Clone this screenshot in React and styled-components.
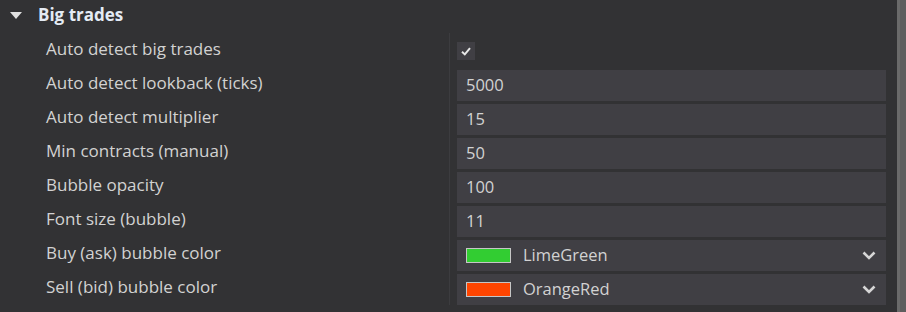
import React from "react"
import styled, { createGlobalStyle } from "styled-components"

const GlobalStyle = createGlobalStyle`
  html, body {
    margin: 0;
    padding: 0;
    background: #323234;
  }
  body {
    font-family: "Open Sans", "Noto Sans", sans-serif;
  }
`

const Page = styled.div`
  display: flex;
  width: 906px;
  height: 312px;
  overflow: hidden;
  background: #323234;
`
const Panel = styled.div`
  flex: 1;
  display: flex;
  flex-direction: column;
`
const Scrollbar = styled.div`
  width: 9px;
  background: #5e5e5e;
  border-left: 3px solid #6a6a6a;
  box-sizing: border-box;
`
const Header = styled.div`
  display: flex;
  align-items: center;
  height: 33px;
  padding-left: 10px;
  gap: 16px;
  color: #e4ebf4;
  font-weight: 700;
  font-size: 17px;
  padding-bottom: 5px;
  box-sizing: border-box;
`
const Caret = styled.span`
  width: 0;
  height: 0;
  border-left: 6px solid transparent;
  border-right: 6px solid transparent;
  border-top: 7px solid #e0e0e0;
  margin-top: 2px;
`
const Row = styled.div`
  display: grid;
  grid-template-columns: 449px 1fr;
  height: 34px;
`
const Label = styled.div`
  display: flex;
  align-items: center;
  padding-left: 46px;
  padding-bottom: 3px;
  color: #d2d2d2;
  font-size: 17px;
`
const Cell = styled.div`
  border-left: 1px solid #3c3c3f;
  padding: 3px 11px 0 7px;
  display: flex;
  align-items: ${p => (p.$top ? "center" : "stretch")};
`
const Field = styled.div`
  flex: 1;
  display: flex;
  align-items: center;
  gap: 12px;
  background: #403f44;
  padding: 0 9px 3px;
  color: #d2d2d2;
  font-size: 16.5px;
`
const Check = styled.div`
  width: 18px;
  height: 18px;
  background: #403f44;
  display: flex;
  align-items: center;
  justify-content: center;
  margin-top: -1px;
`
const Swatch = styled.span`
  width: 43px;
  height: 13px;
  border: 1px solid #c6c6c6;
  background: ${p => p.$color};
  margin-top: 3px;
`
const Chevron = styled.svg`
  margin-left: auto;
  margin-right: 1px;
  margin-top: 3px;
`

const rows = [
  { label: "Auto detect lookback (ticks)", value: "5000" },
  { label: "Auto detect multiplier", value: "15" },
  { label: "Min contracts (manual)", value: "50" },
  { label: "Bubble opacity", value: "100" },
  { label: "Font size (bubble)", value: "11" },
  { label: "Buy (ask) bubble color", value: "LimeGreen", color: "#32cd32" },
  { label: "Sell (bid) bubble color", value: "OrangeRed", color: "#ff4500" },
]

const App = () => {
  return (
    <Page>
      <GlobalStyle />
      <Panel>
        <Header>
          <Caret />
          Big trades
        </Header>
        <Row>
          <Label>Auto detect big trades</Label>
          <Cell $top>
            <Check>
              <svg width="10" height="9" viewBox="0 0 10 9">
                <path d="M1 4.8 L3.8 7.4 L9 1.2" fill="none" stroke="#e8e8e8" strokeWidth="2" />
              </svg>
            </Check>
          </Cell>
        </Row>
        {rows.map(r => (
          <Row key={r.label}>
            <Label>{r.label}</Label>
            <Cell>
              <Field>
                {r.color && <Swatch $color={r.color} />}
                {r.value}
                {r.color && (
                  <Chevron width="14" height="9" viewBox="0 0 14 9">
                    <path d="M1.5 1.5 L7 7 L12.5 1.5" fill="none" stroke="#d6d6d6" strokeWidth="2.6" />
                  </Chevron>
                )}
              </Field>
            </Cell>
          </Row>
        ))}
      </Panel>
      <Scrollbar />
    </Page>
  )
}

export default App
